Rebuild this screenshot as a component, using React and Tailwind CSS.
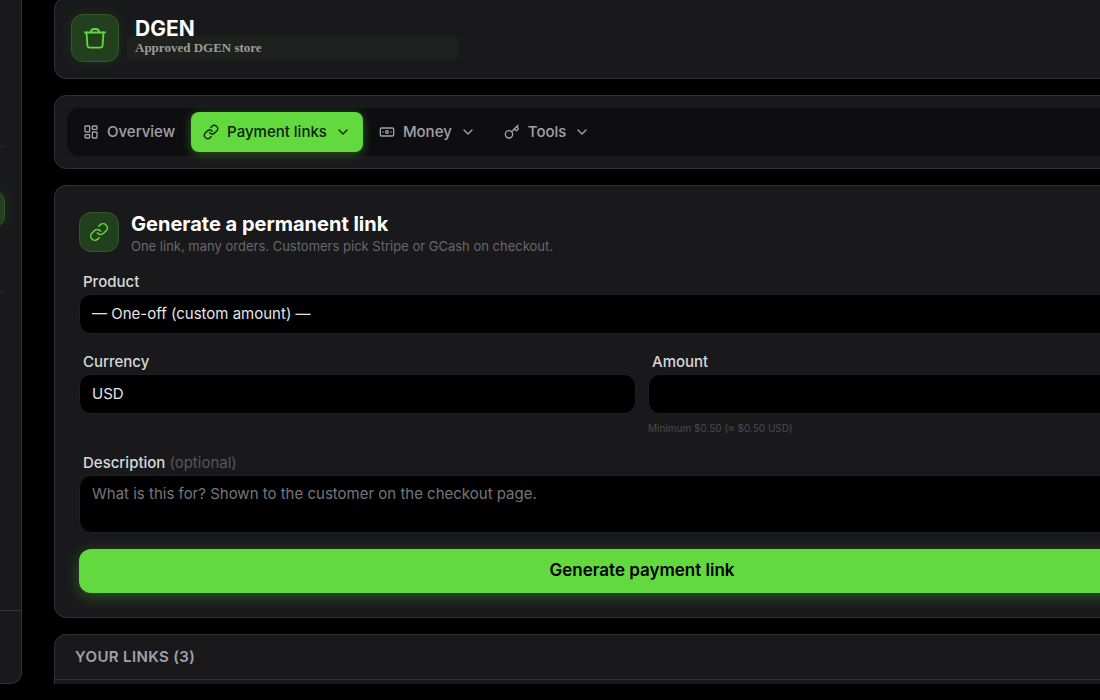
import React, { useState } from 'react';
import { LayoutDashboard, ChevronDown, Banknote, Key, Link } from 'lucide-react';

const tabs = [
  { id: 'overview', label: 'Overview', icon: LayoutDashboard, menu: false },
  { id: 'links', label: 'Payment links', icon: Link, menu: true },
  { id: 'money', label: 'Money', icon: Banknote, menu: true },
  { id: 'tools', label: 'Tools', icon: Key, menu: true },
];

const cardClass = 'rounded-xl border border-[#323234] bg-[#19191b]';
const labelClass = 'mb-0.5 px-1 text-[15px] leading-5 font-medium text-[#d8d8dc]';
const fieldClass = 'w-full appearance-none rounded-xl border border-[#1f1f21] bg-black px-3 text-[15px] text-[#e4e4e7] placeholder:text-[#76767c] outline-none';

function BagIcon() {
  return (
    <svg viewBox="0 0 24 24" className="size-6" fill="none" stroke="currentColor" strokeWidth="1.8" strokeLinecap="round" strokeLinejoin="round">
      <path d="M2 6.5h20" />
      <path d="M3.5 6.5l.9 12.7a2.6 2.6 0 0 0 2.6 2.4h10a2.6 2.6 0 0 0 2.6-2.4l.9-12.7" />
      <path d="M8 6.5V6a3 3 0 0 1 3-3h2a3 3 0 0 1 3 3v.5" />
    </svg>
  );
}

function Sidebar() {
  return (
    <aside className="w-[22px] shrink-0 flex flex-col rounded-br-xl border-r border-b border-[#323234] bg-[#19191b]">
      <div className="flex-1 pt-[146px]">
        <div className="w-[5px] border-t border-[#29292b]" />
        <div className="mt-[43px] mb-[64px] -ml-8 h-[38px] w-[37px] rounded-xl border border-[#30592a] bg-[#22401e] shadow-[0_0_16px_#62d93e1a]" />
        <div className="w-[5px] border-t border-[#29292b]" />
      </div>
      <div className="h-[73px] border-t border-[#323234]" />
    </aside>
  );
}

function StoreHeader() {
  return (
    <header className={`${cardClass} flex items-center gap-2 p-4`}>
      <div className="flex size-12 items-center justify-center rounded-xl border border-[#30592a] bg-[#22401e] text-[#62d93e] shadow-[0_0_16px_#62d93e1a]">
        <BagIcon />
      </div>
      <div className="pt-1.5">
        <h1 className="px-2 text-[21px] leading-[14px] font-bold text-white">DGEN</h1>
        <p className="w-[331px] rounded-sm bg-[#1f211d] px-2 font-['Liberation_Serif',serif] text-[13px] leading-6 font-bold text-[#989e98]">Approved DGEN store</p>
      </div>
    </header>
  );
}

function Tabs({ active, onChange }) {
  return (
    <nav className={`${cardClass} p-3`}>
      <div className="flex items-center gap-1 rounded-xl bg-[#0e0e10] p-1">
        {tabs.map(({ id, label, icon: Icon, menu }) => (
          <button
            key={id}
            type="button"
            onClick={() => onChange(id)}
            className={`flex h-10 items-center gap-2 rounded-lg px-3 text-[15px] font-medium ${
              active === id ? 'bg-[#62d93e] text-[#0b2306] shadow-[0_2px_10px_#62d93e66]' : 'text-[#a1a1aa]'
            }`}
          >
            <Icon className="size-4" strokeWidth={2} />
            <span>{label}</span>
            {menu && <ChevronDown className="size-4" strokeWidth={2} />}
          </button>
        ))}
      </div>
    </nav>
  );
}

function LinkForm() {
  return (
    <form className={`${cardClass} p-6`} onSubmit={(e) => e.preventDefault()}>
      <div className="flex items-center gap-3">
        <div className="flex size-10 items-center justify-center rounded-xl border border-[#30592a] bg-[#22401e] text-[#62d93e]">
          <Link className="size-5" strokeWidth={1.8} />
        </div>
        <div>
          <h2 className="text-xl leading-7 font-bold text-white">Generate a permanent link</h2>
          <p className="text-[13px] leading-4 text-[#67676d]">One link, many orders. Customers pick Stripe or GCash on checkout.</p>
        </div>
      </div>

      <div className="mt-[18px] flex flex-col">
        <label htmlFor="product" className={labelClass}>Product</label>
        <select id="product" className={`${fieldClass} h-10`}>
          <option>— One-off (custom amount) —</option>
        </select>
      </div>

      <div className="mt-[18px] grid grid-cols-2 gap-3">
        <div className="flex flex-col">
          <label htmlFor="currency" className={labelClass}>Currency</label>
          <select id="currency" className={`${fieldClass} h-10`}>
            <option>USD</option>
          </select>
        </div>
        <div className="flex flex-col">
          <label htmlFor="amount" className={labelClass}>Amount</label>
          <input id="amount" type="text" className={`${fieldClass} h-10`} />
          <p className="mt-1.5 text-[10px] leading-4 text-[#4b4b52]">Minimum $0.50 (≈ $0.50 USD)</p>
        </div>
      </div>

      <div className="mt-[17px] flex flex-col">
        <label htmlFor="description" className={labelClass}>
          Description <span className="font-normal text-[#56565d]">(optional)</span>
        </label>
        <textarea id="description" placeholder="What is this for? Shown to the customer on the checkout page." className={`${fieldClass} h-[58px] resize-none py-2 leading-5`} />
      </div>

      <button type="submit" className="mt-4 h-11 w-full rounded-xl bg-[#62d93e] text-[17px] font-semibold text-black shadow-[0_4px_16px_#62d93e4d]">
        Generate payment link
      </button>
    </form>
  );
}

export default function App() {
  const [active, setActive] = useState('links');

  return (
    <div className="h-screen overflow-hidden bg-black pb-4 font-['Inter',sans-serif]">
      <div className="flex h-full gap-8 overflow-hidden">
        <Sidebar />
        <main className="-mt-[3px] -mr-[130px] flex flex-1 flex-col gap-4 *:shrink-0">
          <StoreHeader />
          <Tabs active={active} onChange={setActive} />
          <LinkForm />
          <section className={`${cardClass} h-40`}>
            <h2 className="border-b border-[#323234] px-5 py-3 text-[15px] leading-5 font-semibold tracking-wide text-[#a1a1aa]">YOUR LINKS (3)</h2>
          </section>
        </main>
      </div>
    </div>
  );
}
